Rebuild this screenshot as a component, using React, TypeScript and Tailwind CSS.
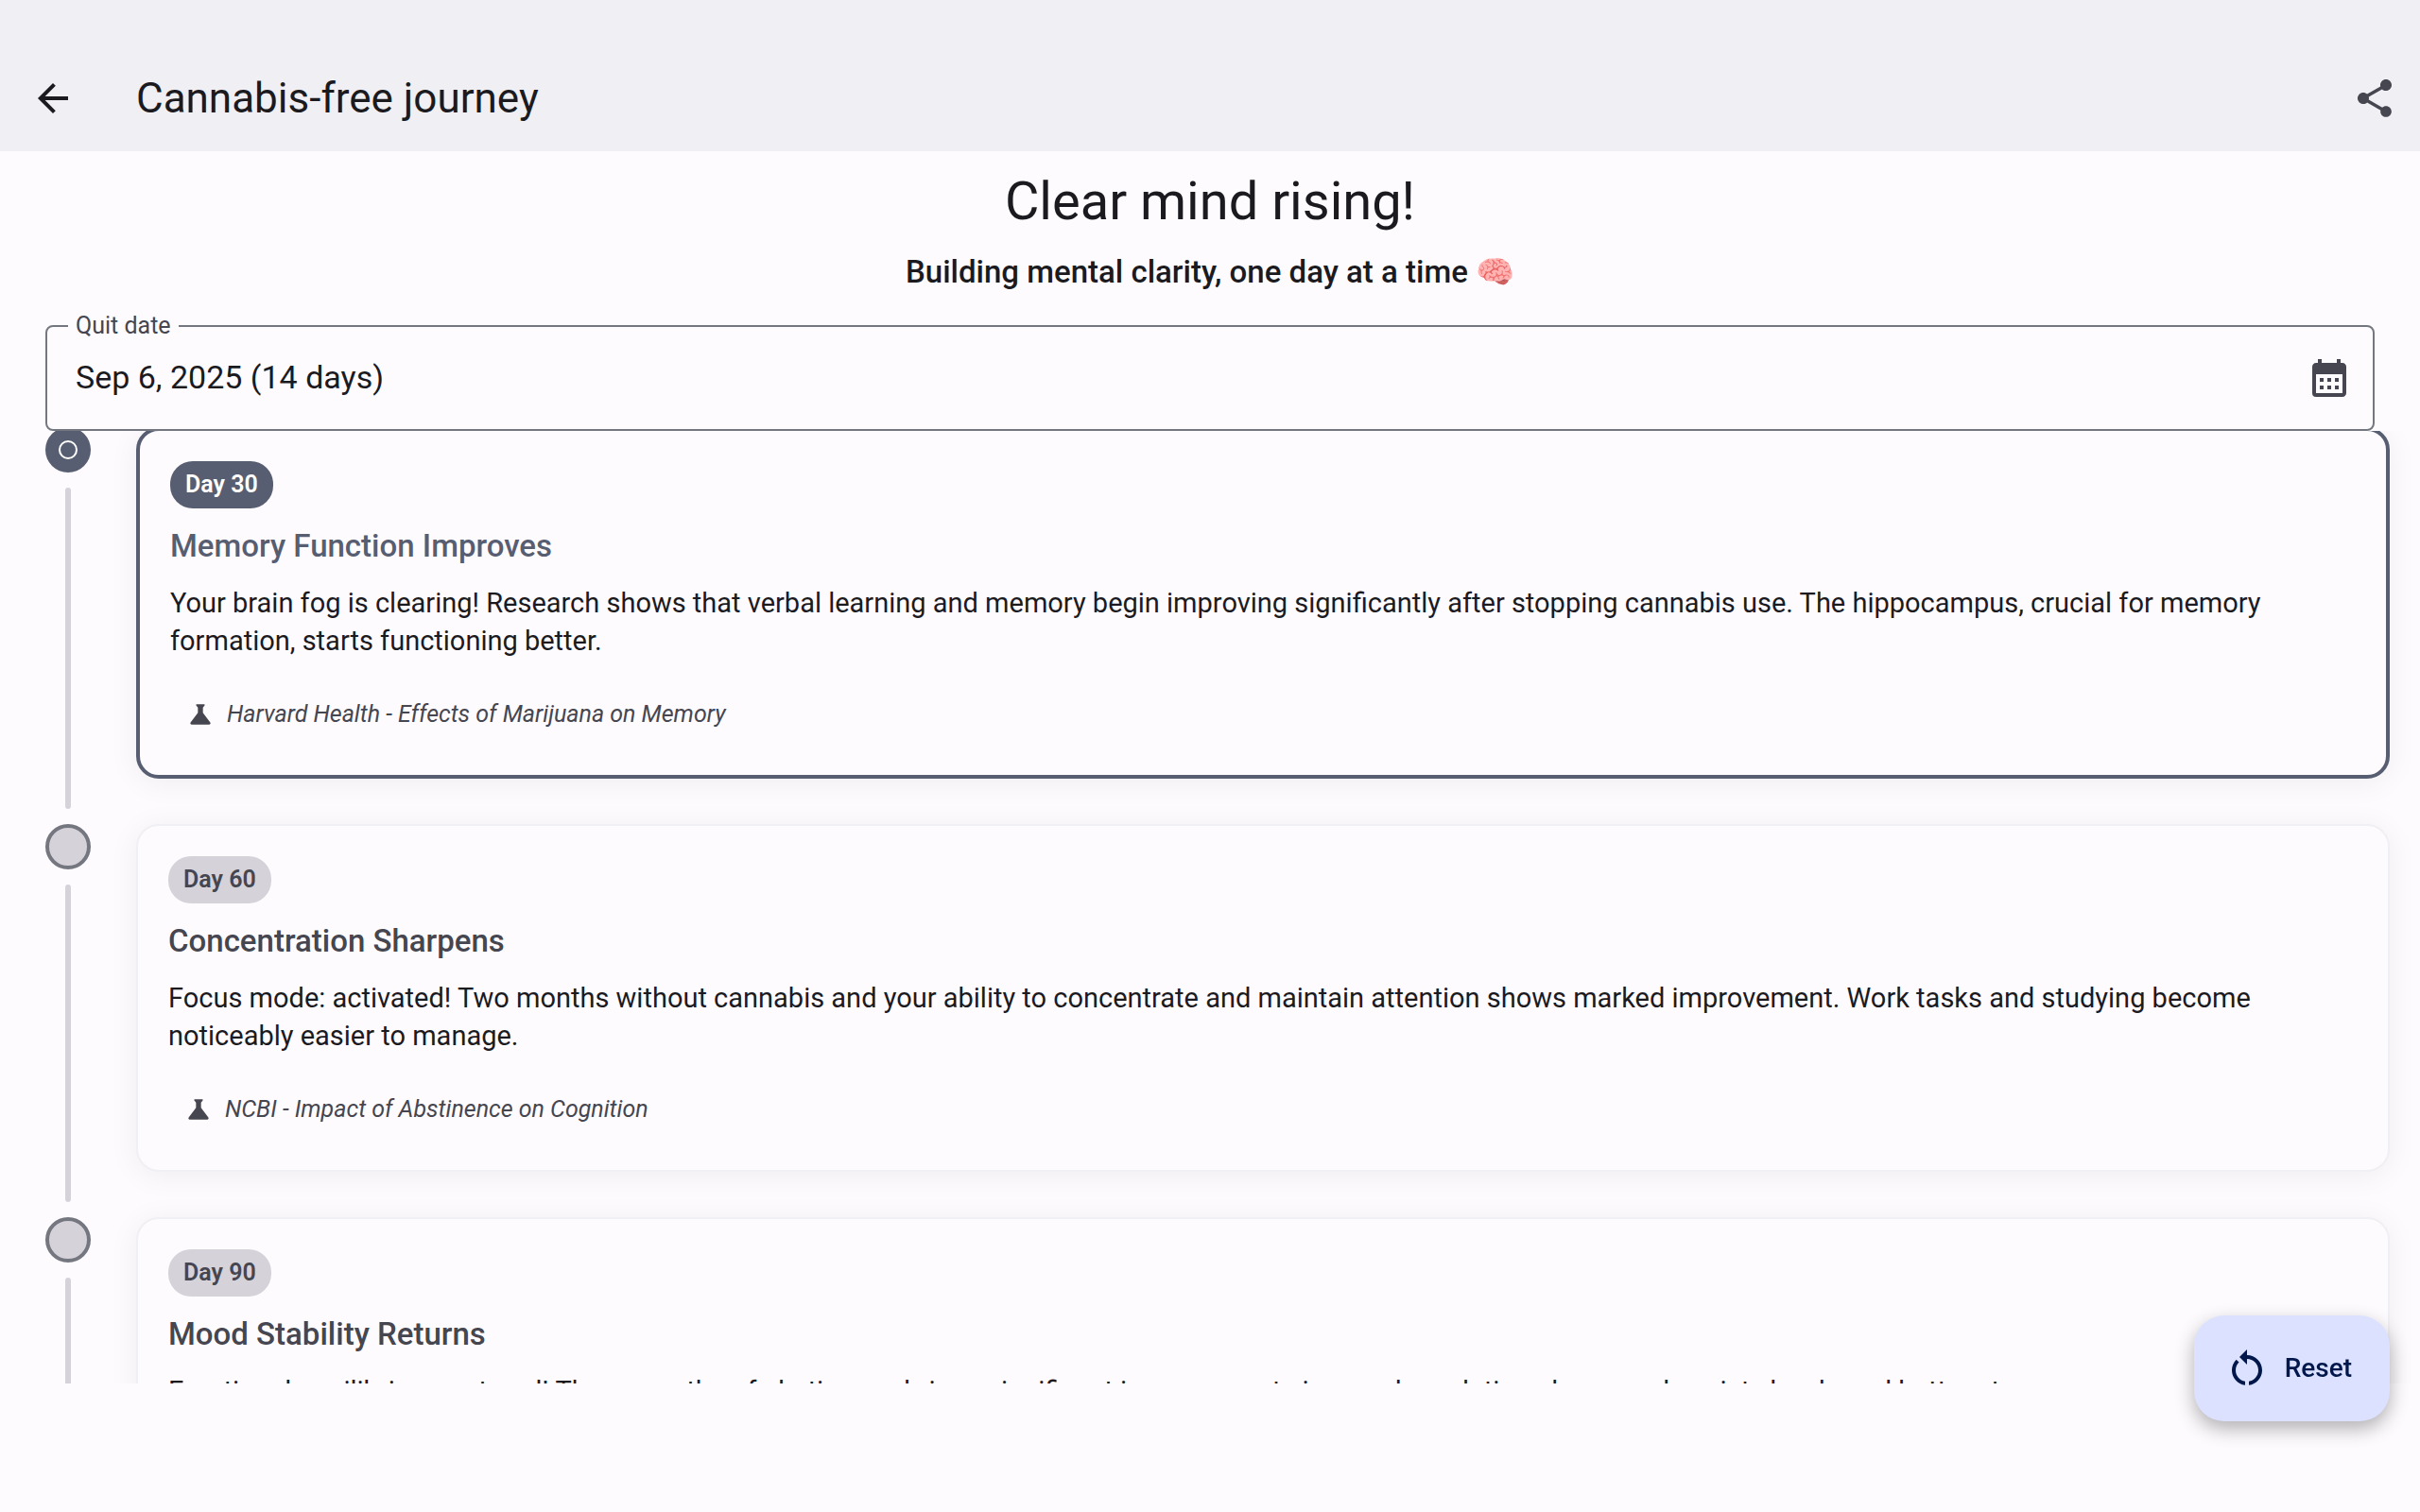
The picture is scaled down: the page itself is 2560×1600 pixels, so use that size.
import { MdArrowBack, MdShare, MdCalendarMonth, MdScience, MdRestartAlt } from "react-icons/md";

type Milestone = {
  day: number;
  title: string;
  body: string;
  source: string;
  active?: boolean;
};

const milestones: Milestone[] = [
  {
    day: 30,
    title: "Memory Function Improves",
    body: "Your brain fog is clearing! Research shows that verbal learning and memory begin improving significantly after stopping cannabis use. The hippocampus, crucial for memory formation, starts functioning better.",
    source: "Harvard Health - Effects of Marijuana on Memory",
    active: true,
  },
  {
    day: 60,
    title: "Concentration Sharpens",
    body: "Focus mode: activated! Two months without cannabis and your ability to concentrate and maintain attention shows marked improvement. Work tasks and studying become noticeably easier to manage.",
    source: "NCBI - Impact of Abstinence on Cognition",
  },
  {
    day: 90,
    title: "Mood Stability Returns",
    body: "Emotional equilibrium restored! Three months of abstinence brings significant improvements in mood regulation, decreased anxiety levels and better stress management.",
    source: "NCBI - Cannabis Abstinence and Mood",
  },
];

function TimelineRow({ item }: { item: Milestone }) {
  return (
    <li className="flex gap-12">
      <div className="flex w-12 shrink-0 flex-col items-center gap-4 pb-4">
        {item.active ? (
          <span className="flex size-12 shrink-0 items-center justify-center rounded-full bg-[#575e71]">
            <span className="size-5 rounded-full border-2 border-white" />
          </span>
        ) : (
          <span className="size-12 shrink-0 rounded-full border-4 border-[#757780] bg-[#d5d2d9]" />
        )}
        <span className="w-1.5 grow rounded-full bg-[#d5d2d9]" />
      </div>
      <div className="min-w-0 grow pb-12">
        <article
          className={
            item.active
              ? "rounded-3xl border-4 border-[#575e71] bg-[#fefbff] p-8 shadow-[0_4px_32px_rgba(0,0,0,0.06)]"
              : "rounded-3xl border-2 border-[#f0eff3] bg-[#fefbff] p-8 shadow-[0_4px_32px_rgba(0,0,0,0.06)]"
          }
        >
          <p
            className={
              item.active
                ? "inline-block rounded-3xl bg-[#575e71] px-4 py-2 text-[25px] leading-[34px] font-semibold text-white"
                : "inline-block rounded-3xl bg-[#d5d2d9] px-4 py-2 text-[25px] leading-[34px] font-semibold text-[#45464f]"
            }
          >
            Day {item.day}
          </p>
          <h2
            className={
              item.active
                ? "mt-3.5 text-[33px] leading-[52px] font-medium text-[#575e71]"
                : "mt-3.5 text-[33px] leading-[52px] font-medium text-[#45464f]"
            }
          >
            {item.title}
          </h2>
          <p className="mt-3.5 text-[29px] leading-10 text-[#1b1b1f]">{item.body}</p>
          <p className="mt-6.5 flex items-center gap-3 p-4 text-[25px] leading-8 text-[#45464f]">
            <MdScience className="size-8" />
            <cite>{item.source}</cite>
          </p>
        </article>
      </div>
    </li>
  );
}

export default function App() {
  return (
    <div className="flex h-screen flex-col bg-[#fefbff] font-[Roboto,sans-serif] text-[#1b1b1f]">
      <header className="flex shrink-0 items-center bg-[#f0eff4] px-6 pt-12">
        <button type="button" aria-label="Back" className="flex h-28 w-16 items-center justify-center">
          <MdArrowBack className="size-12" />
        </button>
        <h1 className="ml-14 grow text-[44px] leading-[56px]">Cannabis-free journey</h1>
        <button type="button" aria-label="Share" className="flex h-28 w-12 items-center justify-center text-[#45464f]">
          <MdShare className="size-12" />
        </button>
      </header>

      <section className="shrink-0 px-12 pt-4 text-center">
        <h2 className="text-[56px] leading-[74px]">Clear mind rising!</h2>
        <p className="mt-3.5 text-[33px] leading-[48px] font-medium">Building mental clarity, one day at a time 🧠</p>
      </section>

      <div className="relative mx-12 mt-8 flex h-28 shrink-0 items-center rounded-lg border-2 border-[#757780] pr-5.5 pl-7.5">
        <label htmlFor="quit-date" className="absolute -top-4 left-5.5 bg-[#fefbff] px-2 text-[25px] leading-[30px] text-[#45464f]">
          Quit date
        </label>
        <input
          id="quit-date"
          readOnly
          defaultValue="Sep 6, 2025 (14 days)"
          className="min-w-0 grow bg-transparent pb-0.5 text-[34px] leading-[48px] outline-none"
        />
        <button type="button" aria-label="Pick a date" className="text-[#45464f]">
          <MdCalendarMonth className="size-12" />
        </button>
      </div>

      <main className="min-h-0 grow overflow-hidden">
        <ol className="-mt-1 pr-8 pl-12">
          {milestones.map((item) => (
            <TimelineRow key={item.day} item={item} />
          ))}
        </ol>
      </main>

      <div className="h-[136px] shrink-0" />

      <button
        type="button"
        className="fixed right-8 bottom-24 flex h-28 items-center gap-4 rounded-[32px] bg-[#dbe1ff] pr-10 pl-8 text-[28px] leading-10 font-medium text-[#00174b] shadow-[0_8px_20px_rgba(0,0,0,0.3)]"
      >
        <MdRestartAlt className="size-12" />
        Reset
      </button>
    </div>
  );
}
